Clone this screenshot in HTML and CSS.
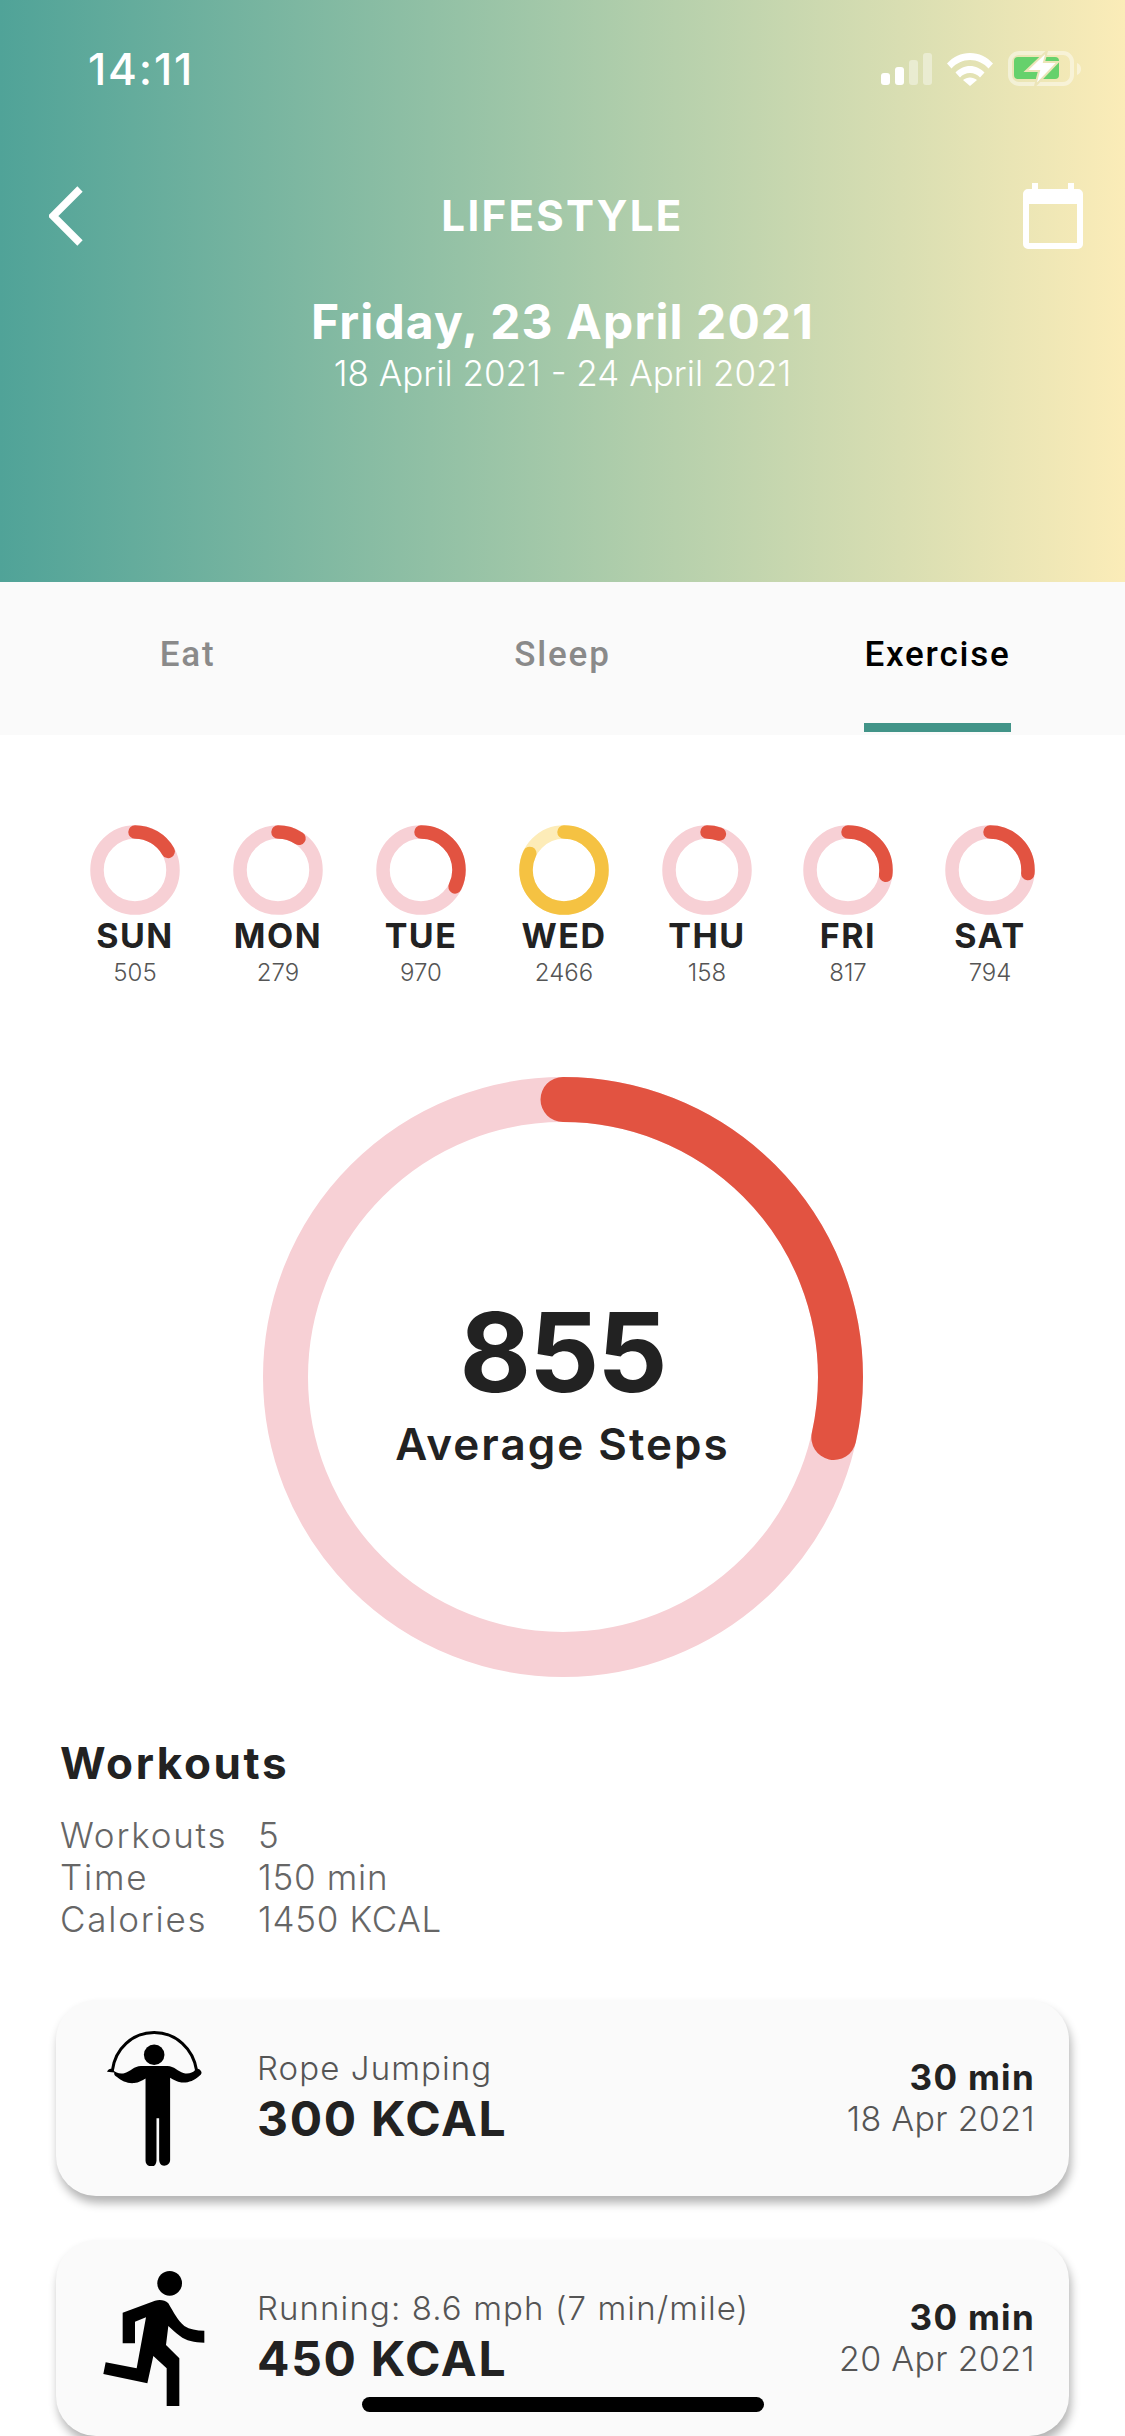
FILE: index.html
```html
<!DOCTYPE html>
<html>
<head>
  <meta charset="utf-8">
  <title>Lifestyle</title>
  <meta name="viewport" content="width=device-width, initial-scale=1">
  <link rel="stylesheet" href="styles.css">
</head>
<body>
  <div class="screen">
    <div class="header">
      <!-- Status bar -->
      <div class="status">
        <span class="time">14:11</span>
        <div class="status-icons">
          <svg width="51" height="32" viewBox="0 0 51 32">
            <rect x="0" y="20" width="9" height="12" rx="3" fill="#fff"/>
            <rect x="14" y="14" width="9" height="18" rx="3" fill="#fff"/>
            <rect x="28" y="7" width="9" height="25" rx="3" fill="#fff" fill-opacity=".4"/>
            <rect x="42" y="0" width="9" height="32" rx="3" fill="#fff" fill-opacity=".4"/>
          </svg>
          <svg class="wifi" width="46" height="33" viewBox="0 0 46 33">
            <path d="M0 10.500C6 4 14 0 23 0s17 4 23 10.500l-4.500 5C36.500 10 30 7 23 7S9.500 10 4.500 15.500z" fill="#fff"/>
            <path d="M8.500 19.500C12.500 15.500 17.500 13 23 13s10.500 2.500 14.500 6.500l-4.500 5C30.500 21.500 27 20 23 20s-7.500 1.500-10 4.500z" fill="#fff"/>
            <path d="M16 27c2-1.500 4.500-2.500 7-2.500s5 1 7 2.500l-7 6z" fill="#fff"/>
          </svg>
          <svg class="battery" width="74" height="36" viewBox="0 0 74 36">
            <rect x="2" y="2" width="62" height="31" rx="9" fill="none" stroke="#fff" stroke-opacity=".45" stroke-width="4"/>
            <path d="M69 12c3 1 4 3.500 4 6s-1 5-4 6z" fill="#fff" fill-opacity=".45"/>
            <rect x="6" y="6" width="45" height="22" rx="4" fill="#66d16c"/>
            <path d="M39 0 18 20h13l-4 15 23-24H36z" fill="#fff" stroke="#ece5b8" stroke-width="2"/>
          </svg>
        </div>
      </div>

      <div class="nav">
        <svg class="back" width="34" height="60" viewBox="0 0 34 60">
          <path d="M31 3 4 30l27 27" fill="none" stroke="#fff" stroke-width="7.500"/>
        </svg>
        <h1>LIFESTYLE</h1>
        <svg class="calendar" width="60" height="66" viewBox="0 0 60 66">
          <path d="M9 0h6v6h30V0h6v6h4a5 5 0 0 1 5 5v50a5 5 0 0 1-5 5H5a5 5 0 0 1-5-5V11a5 5 0 0 1 5-5h4zM6 21v39h48V21z" fill="#fff" fill-rule="evenodd"/>
        </svg>
      </div>

      <div class="date">Friday, 23 April 2021</div>
      <div class="range">18 April 2021 - 24 April 2021</div>
    </div>

    <div class="tabs">
      <div class="tab"><span>Eat</span></div>
      <div class="tab"><span>Sleep</span></div>
      <div class="tab active"><span>Exercise</span></div>
    </div>

    <!-- One ring per day, pathLength 360 so the dash is in degrees (steps / 3000) -->
    <div class="week">
      <div class="day">
        <svg class="mini" viewBox="0 0 90 90"><circle class="track" cx="45" cy="45" r="38" /><circle class="arc" cx="45" cy="45" r="38" pathLength="360" stroke-dasharray="60.600 999" /></svg>
        <b>SUN</b><span>505</span>
      </div>
      <div class="day">
        <svg class="mini" viewBox="0 0 90 90"><circle class="track" cx="45" cy="45" r="38" /><circle class="arc" cx="45" cy="45" r="38" pathLength="360" stroke-dasharray="33.500 999" /></svg>
        <b>MON</b><span>279</span>
      </div>
      <div class="day">
        <svg class="mini" viewBox="0 0 90 90"><circle class="track" cx="45" cy="45" r="38" /><circle class="arc" cx="45" cy="45" r="38" pathLength="360" stroke-dasharray="116.400 999" /></svg>
        <b>TUE</b><span>970</span>
      </div>
      <div class="day today">
        <svg class="mini" viewBox="0 0 90 90"><circle class="track" cx="45" cy="45" r="38" /><circle class="arc" cx="45" cy="45" r="38" pathLength="360" stroke-dasharray="295.900 999" /></svg>
        <b>WED</b><span>2466</span>
      </div>
      <div class="day">
        <svg class="mini" viewBox="0 0 90 90"><circle class="track" cx="45" cy="45" r="38" /><circle class="arc" cx="45" cy="45" r="38" pathLength="360" stroke-dasharray="19 999" /></svg>
        <b>THU</b><span>158</span>
      </div>
      <div class="day">
        <svg class="mini" viewBox="0 0 90 90"><circle class="track" cx="45" cy="45" r="38" /><circle class="arc" cx="45" cy="45" r="38" pathLength="360" stroke-dasharray="98 999" /></svg>
        <b>FRI</b><span>817</span>
      </div>
      <div class="day">
        <svg class="mini" viewBox="0 0 90 90"><circle class="track" cx="45" cy="45" r="38" /><circle class="arc" cx="45" cy="45" r="38" pathLength="360" stroke-dasharray="95.300 999" /></svg>
        <b>SAT</b><span>794</span>
      </div>
    </div>

    <div class="average">
      <svg class="big" viewBox="0 0 600 600">
        <circle class="track" cx="300" cy="300" r="277.500" />
        <circle class="arc" cx="300" cy="300" r="277.500" pathLength="360" stroke-dasharray="102.600 999" />
      </svg>
      <div class="average-text">
        <div class="steps">855</div>
        <div class="steps-label">Average Steps</div>
      </div>
    </div>

    <div class="summary">
      <h2>Workouts</h2>
      <div class="stats">
        <span class="stat-name">Workouts</span><span class="stat-value">5</span>
        <span class="stat-name">Time</span><span class="stat-value">150 min</span>
        <span class="stat-name">Calories</span><span class="stat-value">1450 KCAL</span>
      </div>
    </div>

    <div class="cards">
      <div class="card">
        <div class="card-icon">
          <svg width="95" height="135" viewBox="198 153 286 405">
            <circle cx="340" cy="224" r="31" fill="#000"/>
            <path d="M214 272C222 205 275 157 340 157s118 48 128 115" fill="none" stroke="#000" stroke-width="9"/>
            <path d="M198 275c4-8 12-12 18-6 8 10 22 14 36 10 16-4 28-21 48-21h80c20 0 32 17 48 21 14 4 28 0 36-10 6-6 14-2 18 6 2 6-2 10-8 14-14 12-32 20-52 18-14-2-24-8-34-14v248c0 10-8 17-18 17s-14-7-15-17V415h-8v128c-1 10-5 17-15 17s-18-7-18-17V295c-10 6-20 12-34 14-20 2-38-6-52-18-6-4-10-8-8-14z" fill="#000"/>
          </svg>
        </div>
        <div class="card-main">
          <div class="card-title">Rope Jumping</div>
          <div class="card-kcal">300 KCAL</div>
        </div>
        <div class="card-side">
          <div class="card-time">30 min</div>
          <div class="card-date">18 Apr 2021</div>
        </div>
      </div>

      <div class="card">
        <div class="card-icon">
          <svg width="102" height="135" viewBox="190 873 304 405">
            <circle cx="389" cy="910" r="37" fill="#000"/>
            <path d="M248 998 345 962c15-4 30-2 40 8 18 30 28 52 48 68 16 10 36 14 60 14v36c-30 0-55-6-73-20-14-10-24-20-35-30l-7 57 40 40v143h-38V1165l-40-37-18 82-132-28 7-35 93 18 28-153-33 13v65h-37z" fill="#000"/>
          </svg>
        </div>
        <div class="card-main">
          <div class="card-title">Running: 8.6 mph (7 min/mile)</div>
          <div class="card-kcal">450 KCAL</div>
        </div>
        <div class="card-side">
          <div class="card-time">30 min</div>
          <div class="card-date">20 Apr 2021</div>
        </div>
      </div>
    </div>

    <div class="home-bar"></div>
  </div>
</body>
</html>
```

FILE: styles.css
```css
html, body { margin: 0; padding: 0; background: #fff; }
body { font-family: Inter, "Open Sans", sans-serif; color: #222; }
h1, h2 { margin: 0; }
svg { display: block; }

.screen { position: relative; width: 1125px; height: 2436px; overflow: hidden; background: #fff; }

/* header */
.header { height: 582px; box-sizing: border-box; padding-top: 49px; color: #fff;
          background: linear-gradient(90deg, #50a398 0%, #a5c9a9 50%, #fbecb8 100%); }
.status { display: flex; justify-content: space-between; align-items: center; height: 40px; padding: 0 43px 0 88px; }
.time { font-size: 44px; font-weight: 500; line-height: 40px; letter-spacing: 1.8px; }
.status-icons { display: flex; align-items: center; }
.wifi { margin-left: 15px; }
.battery { margin-left: 15px; }

.nav { display: grid; grid-template-columns: 1fr auto 1fr; align-items: center; height: 66px; margin-top: 94px; padding: 0 42px; }
.back { margin-left: 7px; }
.calendar { justify-self: end; }
.nav h1 { font-size: 42px; font-weight: 700; line-height: 66px; letter-spacing: 2.3px; }
.date { margin-top: 48px; font-size: 48px; font-weight: 700; line-height: 50px; letter-spacing: 1.1px; text-align: center; }
.range { margin-top: 6px; font-size: 35px; font-weight: 300; line-height: 40px; text-align: center; }

/* tabs */
.tabs { display: grid; grid-template-columns: repeat(3, 1fr); height: 153px; box-sizing: border-box; padding-top: 53px; background: #fafafa; }
.tab { text-align: center; font-family: Roboto, sans-serif; font-size: 35px; font-weight: 500; line-height: 40px; letter-spacing: 1.8px; color: #8a8a8a; }
.tab span { display: inline-block; height: 88px; }
.tab.active { color: #000; }
.tab.active span { border-bottom: 9px solid #429488; }

/* week rings */
.week { display: flex; gap: 53px; padding: 90px 90px 0; }
.day { width: 90px; display: flex; flex-direction: column; align-items: center; }
.day:nth-child(6) { margin-left: -2px; }
.day:nth-child(7) { margin-left: -1px; }
.day b { margin-top: 3.5px; font-size: 34px; font-weight: 700; line-height: 34px; letter-spacing: 1.5px; white-space: nowrap; }
.day span { margin-top: 5px; font-size: 24px; font-weight: 300; line-height: 30px; color: #555; }
.mini { width: 90px; height: 90px; transform: rotate(-90deg); }
.mini circle { fill: none; stroke-width: 13.5; }
.big { grid-area: 1 / 1; width: 600px; height: 600px; transform: rotate(-90deg); }
.big circle { fill: none; stroke-width: 45; }
.track { stroke: #f7d0d5; }
.arc { stroke: #e25341; stroke-linecap: round; }
.today .track { stroke: #fdecb8; }
.today .arc { stroke: #f5c242; }

/* average */
.average { display: grid; width: 600px; margin: 89.5px auto 0; }
.average-text { grid-area: 1 / 1; display: flex; flex-direction: column; align-items: center; justify-content: center; padding-top: 17px; }
.steps { font-size: 110px; font-weight: 700; line-height: 100px; letter-spacing: -2px; }
.steps-label { margin-top: 17.5px; font-size: 44px; font-weight: 600; line-height: 50px; letter-spacing: 2px; }

/* summary */
.summary { padding: 60.5px 0 0 60px; }
.summary h2 { font-size: 44px; font-weight: 700; line-height: 50px; letter-spacing: 2.6px; }
.stats { display: grid; grid-template-columns: 198px auto; margin-top: 26px; font-size: 35px; font-weight: 300; line-height: 42px; color: #666; }
.stat-name { letter-spacing: 1.8px; }
.stat-value { letter-spacing: .7px; }

/* cards */
.cards { display: flex; flex-direction: column; gap: 44px; margin: 60.5px 56px 0; }
.card { flex: none; display: flex; align-items: center; height: 196px; padding-right: 34px; border-radius: 40px; background: #fafafa; box-shadow: 2px 7px 10px rgba(0,0,0,.3); }
.card-icon { display: flex; justify-content: center; width: 102px; margin: 0 52px 0 47px; }
.card-main { flex: 1; }
.card-title { font-size: 33px; font-weight: 300; line-height: 40px; letter-spacing: 1.1px; color: #555; }
.card-kcal { margin-top: 1px; font-size: 48px; font-weight: 700; line-height: 60px; letter-spacing: 1.7px; }
.card-side { text-align: right; }
.card-time { font-size: 35px; font-weight: 700; line-height: 40px; letter-spacing: 1.3px; }
.card-date { margin-top: 2px; font-size: 34px; font-weight: 300; line-height: 40px; letter-spacing: .3px; color: #555; }

.home-bar { position: absolute; left: 362px; top: 2397px; width: 402px; height: 15px; border-radius: 8px; background: #000; }
```
